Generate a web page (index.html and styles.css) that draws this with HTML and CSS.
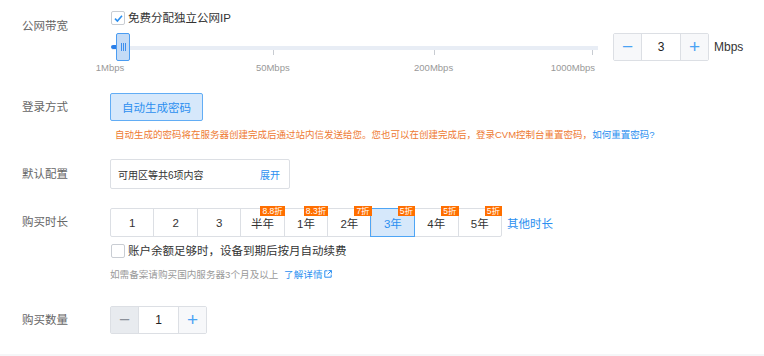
FILE: index.html
```html
<!DOCTYPE html>
<html lang="zh-CN">
<head>
  <meta charset="UTF-8" />
  <title>购买配置</title>
  <link rel="stylesheet" href="styles.css">
</head>
<body>
  <div class="form">
    <!-- 公网带宽 -->
    <div class="row row-bandwidth">
      <div class="label">公网带宽</div>
      <div class="field">
        <label class="check">
          <span class="box">
            <svg width="11" height="11" viewBox="0 0 11 11"><path d="M2 5.6 L4.4 8 L9 2.8" fill="none" stroke="#2b8ff0" stroke-width="1.6"/></svg>
          </span>
          免费分配独立公网IP
        </label>
        <div class="bw-line">
          <div class="slider">
            <div class="track">
              <div class="fill"></div>
              <div class="handle"><i></i><i></i><i></i></div>
            </div>
            <div class="scale">
              <span class="tick first"><em>1Mbps</em></span>
              <span class="tick" style="left: 33.5%"><em>50Mbps</em></span>
              <span class="tick" style="left: 67%"><em>200Mbps</em></span>
              <span class="tick last" style="left: 100%"><em>1000Mbps</em></span>
            </div>
          </div>
          <div class="stepper">
            <button class="minus">−</button>
            <span class="value">3</span>
            <button class="plus">+</button>
          </div>
          <span class="unit">Mbps</span>
        </div>
      </div>
    </div>

    <!-- 登录方式 -->
    <div class="row row-login">
      <div class="label">登录方式</div>
      <div class="field">
        <button class="btn-select">自动生成密码</button>
        <p class="hint-warn">自动生成的密码将在服务器创建完成后通过站内信发送给您。您也可以在创建完成后，登录CVM控制台重置密码，<a href="#">如何重置密码?</a></p>
      </div>
    </div>

    <!-- 默认配置 -->
    <div class="row row-config">
      <div class="label">默认配置</div>
      <div class="field">
        <div class="config-box">
          <span>可用区等共6项内容</span>
          <a href="#">展开</a>
        </div>
      </div>
    </div>

    <!-- 购买时长 -->
    <div class="row row-period">
      <div class="label">购买时长</div>
      <div class="field">
        <div class="period-line">
          <div class="periods">
            <span class="cell">1</span>
            <span class="cell">2</span>
            <span class="cell">3</span>
            <span class="cell">半年<b class="tag">8.8折</b></span>
            <span class="cell">1年<b class="tag">8.3折</b></span>
            <span class="cell">2年<b class="tag">7折</b></span>
            <span class="cell active">3年<b class="tag">5折</b></span>
            <span class="cell">4年<b class="tag">5折</b></span>
            <span class="cell">5年<b class="tag">5折</b></span>
          </div>
          <a href="#" class="more">其他时长</a>
        </div>
        <label class="check renew">
          <span class="box"></span>
          账户余额足够时，设备到期后按月自动续费
        </label>
        <p class="hint-gray">如需备案请购买国内服务器3个月及以上 <a href="#">了解详情<svg width="8" height="8" viewBox="0 0 8 8"><path d="M3.5 0.8 H0.8 V7.2 H7.2 V4.5" fill="none" stroke="#2b8ff0" stroke-width="1"/><path d="M4.5 0.6 H7.4 V3.5 M7.4 0.6 L3.6 4.4" fill="none" stroke="#2b8ff0" stroke-width="1"/></svg></a></p>
      </div>
    </div>

    <!-- 购买数量 -->
    <div class="row row-count">
      <div class="label">购买数量</div>
      <div class="field">
        <div class="stepper">
          <button class="minus disabled">−</button>
          <span class="value">1</span>
          <button class="plus">+</button>
        </div>
      </div>
    </div>
  </div>
  <div class="footer-strip"></div>
</body>
</html>
```

FILE: styles.css
```css
:root {
  --blue: #2b8ff0;
  --orange: #ee7a32;
  --tag: #ff6f00;
  --border: #dcdfe4;
  --label: #666;
  --text: #333;
}

body {
  margin: 0;
  background: #fff;
  color: var(--text);
  font-family: "Liberation Sans", "Noto Sans CJK SC", sans-serif;
  font-size: 12px;
  overflow: hidden;
}

a {
  color: var(--blue);
  text-decoration: none;
}

p {
  margin: 0;
}

button {
  font-family: inherit;
  cursor: pointer;
}

.form {
  padding: 10px 0 0 22px;
}

.row {
  display: flex;
}

.label {
  width: 88px;
  flex: none;
  color: var(--label);
  font-size: 11.5px;
  line-height: 28px;
}

.field {
  display: flex;
  flex-direction: column;
  align-items: flex-start;
}

/* checkbox */
.check {
  display: flex;
  align-items: center;
  gap: 3px;
  height: 16px;
  line-height: 16px;
  margin-left: 1px;
  font-size: 11.5px;
  color: var(--text);
}

.box {
  width: 12px;
  height: 12px;
  border: 1px solid #c9cdd3;
  border-radius: 2px;
  background: #fff;
  display: flex;
  align-items: center;
  justify-content: center;
}

/* bandwidth */
.row-bandwidth .label {
  line-height: 20px;
  padding-top: 6px;
}

.bw-line {
  display: flex;
  align-items: flex-start;
  margin-top: 7px;
}

.slider {
  width: 486px;
  margin-left: 2px;
}

.track {
  position: relative;
  height: 28px;
}

.track::before {
  content: "";
  position: absolute;
  left: 0;
  right: 0;
  top: 13px;
  height: 4px;
  background: #e8edf5;
}

.fill {
  position: absolute;
  left: -1px;
  top: 12px;
  width: 8px;
  height: 4px;
  border-radius: 2px;
  background: #2b7fe8;
}

.handle {
  position: absolute;
  left: 4px;
  top: 0;
  width: 12px;
  height: 26px;
  border: 1px solid #4a9cf2;
  border-radius: 2px;
  background: #c4dbf6;
  display: flex;
  align-items: center;
  justify-content: center;
  gap: 1px;
}

.handle i {
  width: 1px;
  height: 8px;
  background: #3e8fee;
}

.scale {
  position: relative;
  width: 480px;
  height: 14px;
  margin-top: -11px;
}

.tick {
  position: absolute;
  top: 0;
  width: 1px;
  height: 5px;
  background: #c8ccd2;
}

.tick.first {
  background: transparent;
}

.tick em {
  position: absolute;
  top: 12px;
  left: 0;
  transform: translateX(-50%);
  font-style: normal;
  font-size: 9.5px;
  line-height: 12px;
  color: #999;
  white-space: nowrap;
}

.tick.first em {
  left: -2px;
}

.tick.last em {
  left: auto;
  right: -2px;
  transform: none;
}

.stepper {
  display: flex;
  height: 28px;
  border: 1px solid var(--border);
  border-radius: 2px;
  box-sizing: border-box;
  margin-left: 15px;
}

.stepper button {
  width: 28px;
  border: none;
  background: #f7f8fa;
  color: #4aa3f4;
  font-size: 19px;
  font-weight: 300;
  line-height: 24px;
  padding: 0;
}

.stepper .minus {
  border-right: 1px solid var(--border);
}

.stepper .plus {
  border-left: 1px solid var(--border);
}

.stepper .minus.disabled {
  background: #e8ebef;
  color: #8a9099;
}

.stepper .value {
  width: 38px;
  text-align: center;
  line-height: 26px;
  font-size: 12px;
  color: #222;
}

.unit {
  margin-left: 5px;
  line-height: 28px;
  font-size: 12px;
  color: var(--text);
}

/* login */
.row-login {
  margin-top: 29px;
}

.btn-select {
  height: 28px;
  padding: 0 11px;
  border: 1px solid #62adf5;
  border-radius: 2px;
  background: #d6e8fb;
  color: var(--blue);
  font-size: 11.5px;
}

.hint-warn {
  margin-top: 7px;
  margin-left: 5px;
  line-height: 14px;
  font-size: 9.5px;
  color: var(--orange);
  white-space: nowrap;
}

/* default config */
.row-config {
  margin-top: 17px;
}

.row-config .label {
  line-height: 30px;
}

.config-box {
  width: 180px;
  height: 30px;
  box-sizing: border-box;
  border: 1px solid var(--border);
  border-radius: 2px;
  padding: 0 9px 0 7px;
  display: flex;
  justify-content: space-between;
  align-items: center;
  font-size: 10px;
  color: var(--text);
}

/* period */
.row-period {
  margin-top: 19px;
}

.row-period .label {
  line-height: 29px;
}

.period-line {
  display: flex;
  align-items: center;
}

.periods {
  display: flex;
  width: 392px;
  height: 29px;
  border: 1px solid var(--border);
  border-radius: 2px;
  box-sizing: border-box;
}

.cell {
  position: relative;
  flex: 1;
  display: flex;
  align-items: center;
  justify-content: center;
  font-size: 11.5px;
  color: var(--text);
  border-left: 1px solid var(--border);
}

.cell:first-child {
  border-left: none;
}

.cell.active {
  background: #d6e8fb;
  color: var(--blue);
  outline: 1px solid #4ea5f5;
  z-index: 1;
}

.tag {
  position: absolute;
  right: -1px;
  top: -3px;
  padding: 0 2px;
  height: 10px;
  line-height: 10px;
  font-size: 8.5px;
  font-weight: normal;
  color: #fff;
  background: var(--tag);
  z-index: 2;
}

.more {
  margin-left: 5px;
  font-size: 11.5px;
}

.check.renew {
  margin-top: 6px;
}

.hint-gray {
  margin-top: 9px;
  line-height: 14px;
  font-size: 9.6px;
  color: #999;
}

.hint-gray a {
  margin-left: 3px;
}

.hint-gray svg {
  margin-left: 2px;
}

/* count */
.row-count {
  margin-top: 24px;
}

.row-count .stepper {
  margin-left: 0;
}

.row-count .stepper .value {
  width: 39px;
}

.footer-strip {
  height: 12px;
  margin-top: 20px;
  background: #f5f6f8;
}
```
